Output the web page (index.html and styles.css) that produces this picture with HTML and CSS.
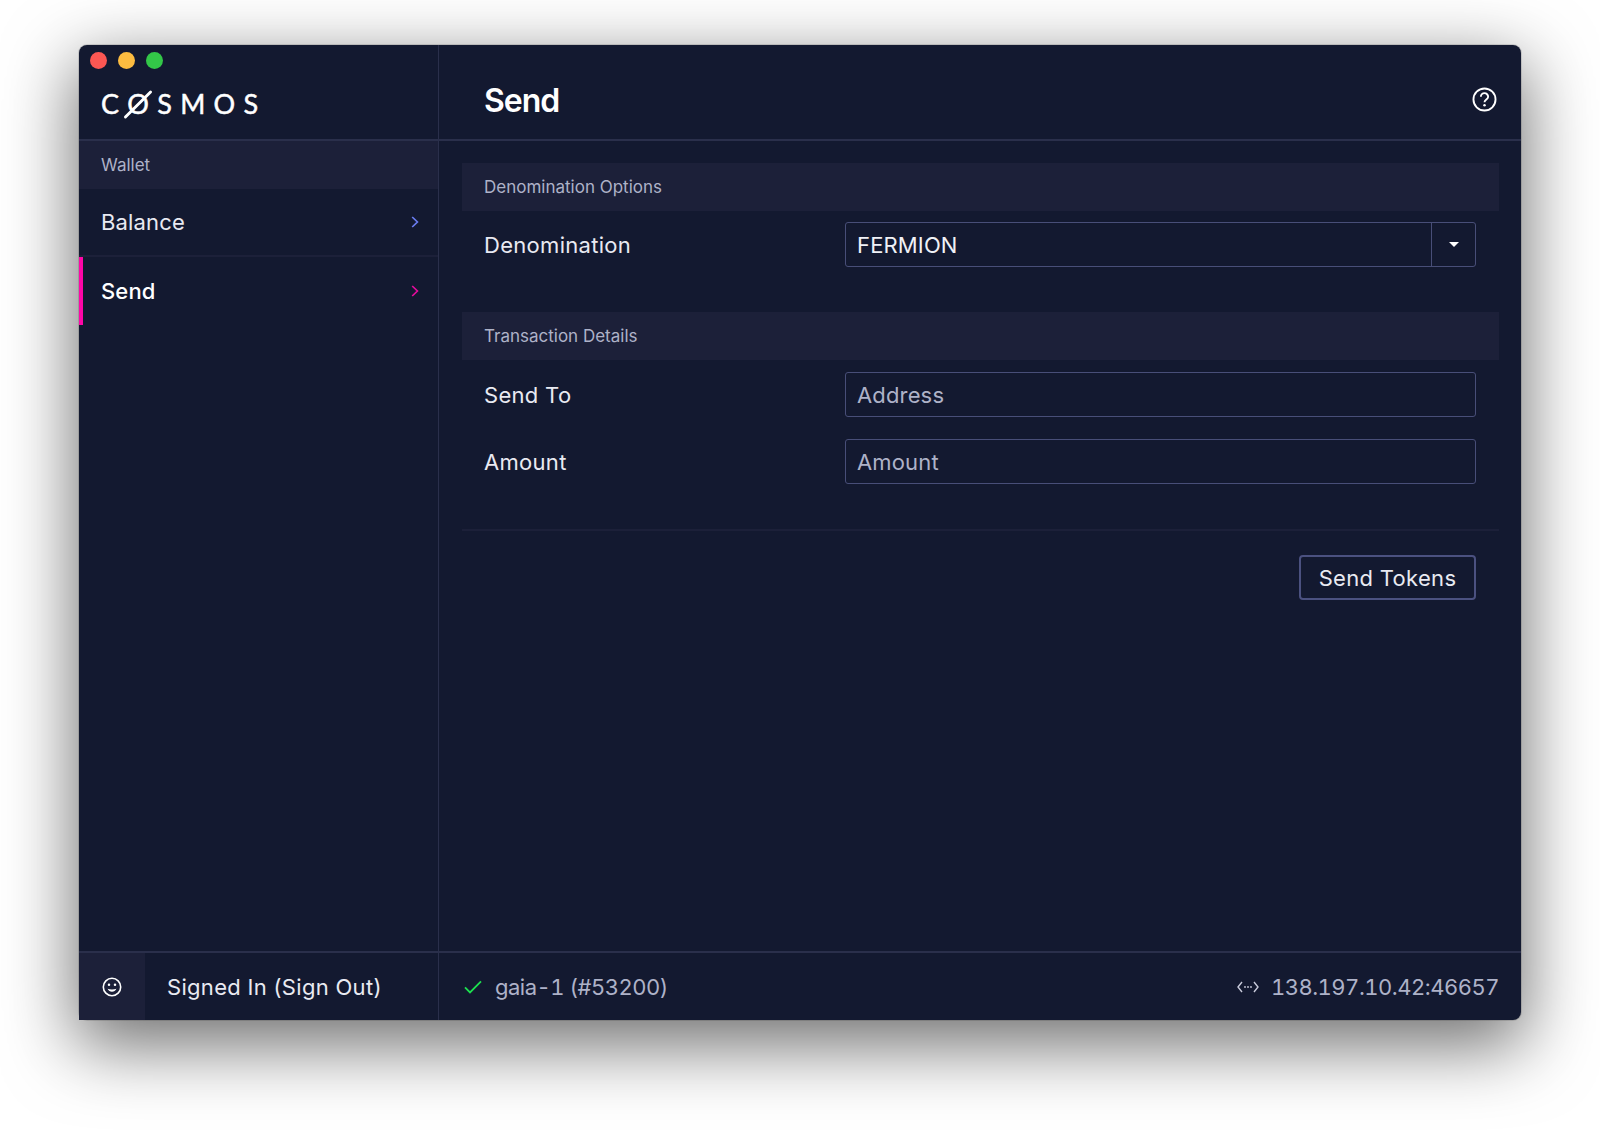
FILE: index.html
```html
<!DOCTYPE html>
<html lang="en">
<head>
<meta charset="utf-8">
<title>Cosmos - Send</title>
<link rel="stylesheet" href="styles.css">
</head>
<body>
<div class="window">
  <div class="lights"><i class="light red"></i><i class="light amber"></i><i class="light green"></i></div>
  <aside class="sidebar">
    <div class="brand">
      <div class="logo"><span>C</span><span class="logo-o">O<svg class="logo-slash" viewBox="0 0 30 30" aria-hidden="true"><path d="M2 28 28 2"/></svg></span><span>S</span><span>M</span><span>O</span><span>S</span></div>
    </div>
    <div class="nav-group">Wallet</div>
    <nav class="nav">
      <a class="nav-item">Balance<svg class="chev" viewBox="0 0 8 12"><path d="M1.2 1 6.4 6 1.2 11"/></svg></a>
      <a class="nav-item active">Send<svg class="chev" viewBox="0 0 8 12"><path d="M1.2 1 6.4 6 1.2 11"/></svg></a>
    </nav>
  </aside>
  <main class="main">
    <header class="page-head">
      <h1>Send</h1>
      <svg class="help" viewBox="0 0 24 24"><circle cx="12" cy="12" r="10.6"/><path d="M8.5 9.4a3.5 3.5 0 0 1 7 0c0 2.500-3.500 2.600-3.500 5.200"/><circle class="dot" cx="12" cy="17.6" r="1.2"/></svg>
    </header>
    <div class="content">
      <section class="section">
        <h2 class="section-head">Denomination Options</h2>
        <div class="row">
          <label class="row-label">Denomination</label>
          <div class="select"><span class="select-value">FERMION</span><span class="select-btn"><i class="caret"></i></span></div>
        </div>
      </section>
      <section class="section">
        <h2 class="section-head">Transaction Details</h2>
        <div class="row">
          <label class="row-label">Send To</label>
          <div class="input">Address</div>
        </div>
        <div class="row">
          <label class="row-label">Amount</label>
          <div class="input">Amount</div>
        </div>
      </section>
      <div class="actions"><button class="btn">Send Tokens</button></div>
    </div>
  </main>
  <footer class="user-bar">
    <span class="user-icon"><svg class="smile" viewBox="0 0 20 20"><circle cx="10" cy="10" r="8.7"/><circle class="dot" cx="7" cy="7.8" r="1.25"/><circle class="dot" cx="13" cy="7.8" r="1.25"/><path class="mouth" d="M5.6 11.8c2.4 1 6.4 1 8.8 0-.8 2-2.500 3-4.400 3s-3.600-1-4.400-3z"/></svg></span>
    <span class="user-text">Signed In (Sign Out)</span>
  </footer>
  <footer class="status-bar">
    <span class="status"><svg class="check" viewBox="0 0 18 14"><path d="M1 7.400 6 12.400 17 1.400"/></svg>gaia-1 (#53200)</span>
    <span class="status"><svg class="peer" viewBox="0 0 22 12"><path d="M5 1 1 6l4 5M17 1l4 5-4 5"/><circle cx="8" cy="6" r=".9"/><circle cx="11" cy="6" r=".9"/><circle cx="14" cy="6" r=".9"/></svg>138.197.10.42:46657</span>
  </footer>
</div>
</body>
</html>
```
FILE: styles.css
```css
* { box-sizing: border-box; }
html, body { margin: 0; height: 100%; }
body {
  background: #fff;
  padding: 45px 79px 0;
  overflow: hidden;
  font-family: Inter, "Liberation Sans", sans-serif;
  letter-spacing: .15px;
}
.window {
  position: relative;
  width: 1442px;
  height: 975px;
  display: grid;
  grid-template-columns: 360px 1fr;
  grid-template-rows: 1fr 69px;
  background: #131930;
  border-radius: 8px;
  color: #fff;
  box-shadow: 0 22px 70px 4px rgba(0,0,0,.56), 0 0 0 1px rgba(0,0,0,.12);
}
.lights { position: absolute; left: 11px; top: 7px; display: flex; gap: 11px; }
.light { width: 17px; height: 17px; border-radius: 50%; display: block; }
.red { background: #fc5753; }
.amber { background: #fdbc40; }
.green { background: #33c748; }

.sidebar { border-right: 1px solid #2a2f4b; display: flex; flex-direction: column; }
.brand { height: 96px; padding: 0 0 0 22px; border-bottom: 2px solid #2a2f4b; display: flex; align-items: flex-end; }
.logo { display: flex; gap: 8.3px; font-family: Lato, sans-serif; font-size: 27px; line-height: 27px; letter-spacing: 0; padding-bottom: 22px; color: #fff; -webkit-text-stroke: .5px #fff; }
.logo-o { position: relative; }
.logo-slash { position: absolute; left: -4px; top: 0; width: 30px; height: 29px; overflow: visible; }
.logo-slash path { fill: none; stroke: #fff; stroke-width: 3; stroke-linecap: round; }
.nav-group { height: 48px; background: #1c2039; color: #aeb2c8; font-size: 17px; letter-spacing: 0; line-height: 48px; padding-left: 22px; }
.nav-item { position: relative; display: flex; align-items: center; justify-content: space-between; height: 68px; padding: 0 19px 0 22px; font-size: 22px; color: #e9eaf2; border-bottom: 2px solid #1c2039; }
.nav-item.active { height: 68px; color: #fff; border-bottom: 0; border-left: 4px solid #ff06a8; padding-left: 18px; font-weight: 500; }
.chev { width: 8px; height: 12px; }
.chev path { fill: none; stroke: #6a7cf0; stroke-width: 1.7; }
.active .chev path { stroke: #e40c9c; }

.main { display: flex; flex-direction: column; min-width: 0; }
.page-head { height: 96px; flex: none; display: flex; align-items: center; justify-content: space-between; padding: 17px 24px 0 45px; border-bottom: 2px solid #2a2f4b; }
h1 { margin: 0; font-size: 32px; font-weight: 600; letter-spacing: -1px; line-height: 40px; }
.help { width: 25px; height: 25px; margin-bottom: 2px; }
.help circle, .help path { fill: none; stroke: #fff; stroke-width: 1.8; }
.help .dot { fill: #fff; stroke: none; }
.content { padding: 22px 22px 0 23px; }
.section { padding-bottom: 23px; }
.section + .section { padding-bottom: 23px; border-bottom: 2px solid #1c2039; }
.section-head { margin: 0 0 11px; height: 48px; background: #1c2039; color: #aeb2c8; font-size: 17px; font-weight: 400; letter-spacing: 0; line-height: 48px; padding-left: 22px; }
.section + .section .section-head { margin-bottom: 12px; }
.row { display: grid; grid-template-columns: 361px 1fr; align-items: center; padding: 0 23px 0 22px; height: 45px; margin-bottom: 22px; }
.row-label { font-size: 22px; color: #e9eaf2; letter-spacing: .3px; }
.select, .input { height: 45px; border: 1px solid #484e78; border-radius: 3px; font-size: 22px; display: flex; align-items: center; }
.select-value { flex: 1; padding-left: 11px; color: #f0f1f6; }
.select-btn { width: 44px; align-self: stretch; border-left: 1px solid #484e78; display: flex; align-items: center; justify-content: center; }
.caret { width: 0; height: 0; border: 5px solid transparent; border-top: 5px solid #fff; border-bottom: 0; }
.input { padding-left: 11px; color: #aeb2c8; }
.actions { display: flex; justify-content: flex-end; padding: 24px 23px 0 0; }
.btn { height: 45px; width: 177px; padding: 0; background: transparent; border: 2px solid #4b5180; border-radius: 4px; color: #e9eaf2; font: 400 22px Inter, sans-serif; letter-spacing: .3px; }

.user-bar, .status-bar { border-top: 2px solid #2a2f4b; display: flex; align-items: center; }
.user-bar { border-right: 1px solid #2a2f4b; }
.user-icon { width: 66px; align-self: stretch; background: #1c2039; display: flex; align-items: center; justify-content: center; }
.smile { width: 20px; height: 20px; }
.smile circle { fill: none; stroke: #fff; stroke-width: 1.6; }
.smile .dot { fill: #fff; stroke: none; }
.mouth { fill: #fff; }
.user-text { padding-left: 22px; font-size: 22px; color: #e9eaf2; letter-spacing: .3px; }
.status-bar { justify-content: space-between; padding: 0 22px 0 25px; font-size: 22px; letter-spacing: -.5px; color: #aeb2c8; font-feature-settings: "tnum"; }
.status { display: flex; align-items: center; }
.check { width: 18px; height: 14px; margin-right: 13px; }
.check path { fill: none; stroke: #1de04f; stroke-width: 1.8; }
.peer { width: 22px; height: 12px; margin-right: 12px; }
.peer path { fill: none; stroke: #c9cbdb; stroke-width: 1.4; }
.peer circle { fill: #c9cbdb; }
```
